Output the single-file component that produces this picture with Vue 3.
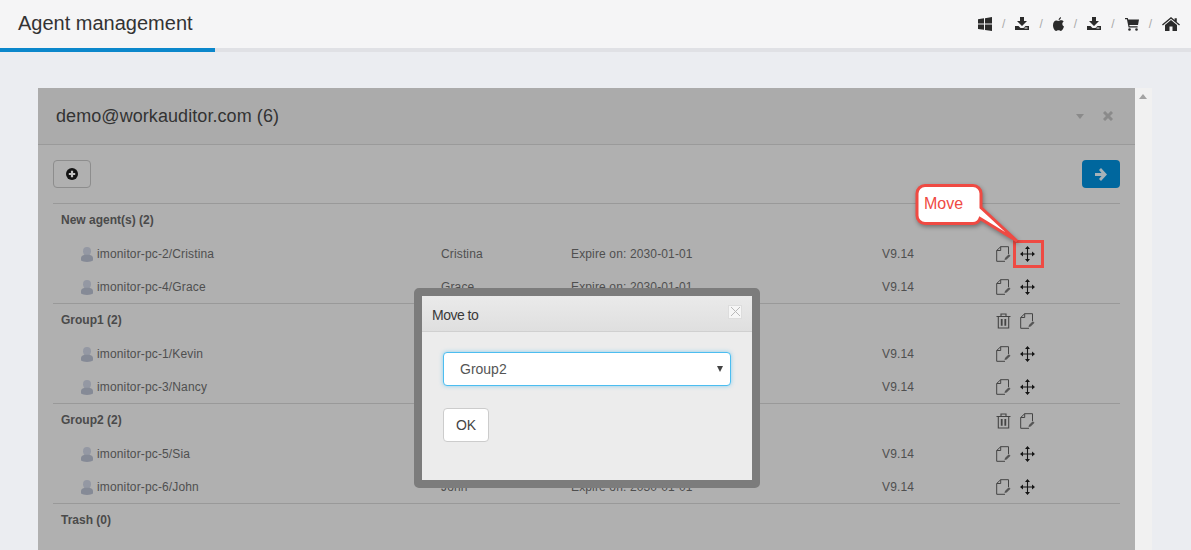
<script setup>
const crumbs = ['win', 'down', 'apple', 'down', 'cart', 'home']
const groups = [
  { name: 'New agent(s) (2)', tools: false, rows: [
    { pc: 'imonitor-pc-2/Cristina', user: 'Cristina' },
    { pc: 'imonitor-pc-4/Grace', user: 'Grace' } ] },
  { name: 'Group1 (2)', tools: true, rows: [
    { pc: 'imonitor-pc-1/Kevin', user: 'Kevin' },
    { pc: 'imonitor-pc-3/Nancy', user: 'Nancy' } ] },
  { name: 'Group2 (2)', tools: true, rows: [
    { pc: 'imonitor-pc-5/Sia', user: 'Sia' },
    { pc: 'imonitor-pc-6/John', user: 'John' } ] },
  { name: 'Trash (0)', tools: false, rows: [] }
]
</script>

<template>
  <div class="page">
    <header class="topbar">
      <h1 class="title">Agent management</h1>
      <nav class="crumbs">
        <template v-for="(c, i) in crumbs" :key="i">
          <span v-if="i" class="sep">/</span>
          <svg v-if="c === 'win'" class="ci" width="14" height="14" viewBox="0 0 14 14"><path fill="#2b2b2b" d="M0 2.200 6 1.300V6.600H0ZM7 1.200 14 0V6.600H7ZM0 7.500H6V12.800L0 11.900ZM7 7.500H14V14L7 12.900Z"/></svg>
          <svg v-else-if="c === 'down'" class="ci" width="14" height="14" viewBox="0 0 14 14"><path fill="#2b2b2b" d="M5 0H9V4H12L7 9 2 4H5ZM0 9H3.500L5.500 11H8.500L10.500 9H14V13H0Z"/><rect x="9.500" y="10.500" width="3" height="1" fill="#f5f5f6"/></svg>
          <svg v-else-if="c === 'apple'" class="ci" width="11" height="14" viewBox="0 0 11 14"><path fill="#2b2b2b" d="M5.600 3.200C5.600 1.600 6.600.4 8 0c.1 1.600-1 3-2.400 3.200ZM5.500 3.900c.9 0 1.500-.6 2.700-.6.9 0 1.900.5 2.500 1.300-2 1.200-1.700 4 .3 4.900-.6 1.900-1.900 4.400-3.200 4.400-.9 0-1.200-.6-2.300-.6s-1.500.6-2.300.6C1.500 13.900 0 10.800 0 8.200 0 5.400 1.600 3.400 3.400 3.400c.9 0 1.500.5 2.100.5Z"/></svg>
          <svg v-else-if="c === 'cart'" class="ci" width="14" height="14" viewBox="0 0 14 14"><path fill="#2b2b2b" d="M0 1H2.800L3.200 2.500H14L13 8H4.300L4.600 9.300H12.600V10.500H3.600L1.900 2.200H0Z"/><circle cx="4.500" cy="12.500" r="1.300" fill="#2b2b2b"/><circle cx="11.500" cy="12.500" r="1.300" fill="#2b2b2b"/></svg>
          <svg v-else class="ci" width="18" height="14" viewBox="0 0 18 14"><path fill="#2b2b2b" d="M3 8 9 3l6 5v6H10.500V9.500h-3V14H3ZM0 7.600 9 0l3.600 3V1.200h2.200V4.900L18 7.600l-.9 1L9 1.800.9 8.600Z"/></svg>
        </template>
      </nav>
    </header>

    <main class="content">
      <section class="panel">
        <div class="panel-head">
          <h2 class="panel-title">demo@workauditor.com (6)</h2>
          <div class="panel-tools">
            <svg width="8" height="5" viewBox="0 0 8 5"><path fill="#8a8a8a" d="M0 0H8L4 5Z"/></svg>
            <svg width="10" height="10" viewBox="0 0 10 10"><path stroke="#8a8a8a" stroke-width="3" d="M1 1 9 9M9 1 1 9"/></svg>
          </div>
        </div>
        <div class="panel-body">
          <div class="toolbar">
            <button class="btn-add">
              <svg width="12" height="12" viewBox="0 0 12 12"><circle cx="6" cy="6" r="6" fill="#141414"/><path stroke="#c4c4c4" stroke-width="2.200" d="M6 2.800V9.200M2.800 6H9.200"/></svg>
            </button>
            <button class="btn-go">
              <svg width="12" height="13" viewBox="0 0 12 13"><path fill="#a8b2b8" d="M6 0 12 6.500 6 13 4 11 6.500 8H0V5H6.500L4 2Z"/></svg>
            </button>
          </div>
          <div v-for="g in groups" :key="g.name" class="group">
            <div class="row head">
              <span class="group-name">{{ g.name }}</span>
              <span class="actions" v-if="g.tools">
                <svg class="ic" width="15" height="16" viewBox="0 0 15 16"><path fill="none" stroke="#444" stroke-width="1.100" d="M.5 3.500H14.500M5 3.500V1H10V3.500M2.300 3.500V15H12.700V3.500"/><path stroke="#444" stroke-width="1.800" d="M5.700 6V12.800M9.300 6V12.800"/></svg>
                <svg class="ic" width="15" height="16" viewBox="0 0 15 16"><path fill="none" stroke="#444" stroke-width="1" d="M9 15.300H.7V4.500L4.700 .7H12.500V8M.7 4.500H4.700V.7"/><path fill="#555" d="M8.500 14 9 12 12.800 8.200 14.500 9.800 10.700 13.500Z"/></svg>
              </span>
            </div>
            <div v-for="r in g.rows" :key="r.pc" class="row">
              <span class="pc">
                <svg class="usr" width="12" height="15" viewBox="0 0 12 15"><ellipse cx="6" cy="4.200" rx="4" ry="4.200" fill="#9498a3"/><path fill="#858a96" d="M0 11C0 9 2 8.200 3.500 7.800H8.500C10 8.200 12 9 12 11V13.500C10 15.400 2 15.400 0 13.500Z"/></svg>
                {{ r.pc }}
              </span>
              <span>{{ r.user }}</span>
              <span>Expire on: 2030-01-01</span>
              <span>V9.14</span>
              <span class="actions">
                <svg class="ic" width="15" height="16" viewBox="0 0 15 16"><path fill="none" stroke="#444" stroke-width="1" d="M9 15.300H.7V4.500L4.700 .7H12.500V8M.7 4.500H4.700V.7"/><path fill="#555" d="M8.500 14 9 12 12.800 8.200 14.500 9.800 10.700 13.500Z"/></svg>
                <svg class="ic" width="15" height="16" viewBox="0 0 15 16"><path fill="none" stroke="#151515" stroke-width="1.100" d="M7.500 1V15M1 8H14"/><path fill="#151515" d="M7.500 0 10 3H5ZM7.500 16 5 13H10ZM0 8 3 5.500V10.500ZM15 8 12 10.500V5.500Z"/></svg>
              </span>
            </div>
          </div>
        </div>
      </section>
      <aside class="scroll"><i class="up"></i></aside>
    </main>

    <div class="highlight"></div>
    <div class="callout">
      <svg width="150" height="100" viewBox="906 176 150 100">
        <path class="bubble" d="M925 185.500H973a8 8 0 0 1 8 8V207.500L1017 241 980 218.500Q978 223.500 973 223.500H925a8 8 0 0 1-8-8V193.500a8 8 0 0 1 8-8Z"/>
      </svg>
      <span class="callout-text">Move</span>
    </div>

    <div class="modal">
      <div class="modal-head">
        <span class="modal-title">Move to</span>
        <span class="modal-x"><svg width="9" height="9" viewBox="0 0 9 9"><path stroke="#b9b9b9" d="M0 0 9 9M9 0 0 9"/></svg></span>
      </div>
      <div class="modal-body">
        <div class="select"><span>Group2</span><i class="caret"></i></div>
        <button class="btn-ok">OK</button>
      </div>
    </div>
  </div>
</template>

<style scoped>
.page { position: relative; width: 1191px; height: 550px; overflow: hidden; background: #ebedf1; font-family: "Liberation Sans", Arial, sans-serif; color: #505050; }
.topbar { height: 48px; display: flex; align-items: center; justify-content: space-between; padding: 0 11px 0 18px; background: #f5f5f6; border-bottom: 4px solid #e0e1e5; position: relative; }
.topbar::after { content: ""; position: absolute; left: 0; bottom: -4px; width: 215px; height: 4px; background: #0b87cb; }
.title { margin: -2px 0 0; font-size: 20px; font-weight: 400; color: #333; line-height: 46px; }
.crumbs { display: flex; align-items: center; }
.ci { display: block; margin-top: -1px; }
.sep { width: 23.4px; text-align: center; font-size: 12px; color: #aaa; }
.content { display: flex; align-items: stretch; padding: 36px 39px 0 38px; }
.panel { flex: 1; min-width: 0; height: 600px; background: #b0b0b0; }
.panel-head { height: 56px; display: flex; align-items: center; justify-content: space-between; padding: 0 22px 0 18px; background: #ababab; border-bottom: 1px solid #9a9a9a; }
.panel-title { margin: 0; font-size: 18px; font-weight: 400; color: #333; letter-spacing: 0.07px; }
.panel-tools { display: flex; align-items: center; gap: 19px; }
.panel-body { padding: 15px 15px 0; }
.toolbar { display: flex; justify-content: space-between; height: 43px; border-bottom: 1px solid #999; box-sizing: content-box; }
.btn-add { width: 38px; height: 28px; padding: 0; border: 1px solid #8d8d8d; border-radius: 4px; background: #b0b0b0; display: flex; align-items: center; justify-content: center; }
.btn-go { width: 38px; height: 28px; padding: 0; border: 0; border-radius: 4px; background: #00679e; display: flex; align-items: center; justify-content: center; }
.group { border-bottom: 1px solid #999; }
.group:last-child { border-bottom: 0; }
.row { height: 33px; display: grid; grid-template-columns: 388px 130px 311px 114px 1fr; align-items: center; font-size: 12px; letter-spacing: 0.14px; color: #4f4f4f; }
.group-name { grid-column: 1 / span 4; padding-left: 8px; font-weight: 700; letter-spacing: 0; color: #4a4a4a; margin-top: -1px; }
.pc { display: flex; align-items: center; padding-left: 28px; gap: 4px; }
.usr { flex: none; margin-top: 1px; }
.actions { display: flex; align-items: center; gap: 9px; margin-top: 1px; }
.ic { display: block; flex: none; }
.scroll { width: 17px; background: #f1f1f1; position: relative; }
.up { position: absolute; left: 4px; top: 6px; border: 4px solid transparent; border-top: 0; border-bottom: 5px solid #a3a3a3; }
.highlight { position: absolute; left: 1013px; top: 240px; width: 31px; height: 28px; box-sizing: border-box; border: 3px solid #ef4a43; }
.callout { position: absolute; left: 906px; top: 176px; width: 150px; height: 100px; }
.bubble { fill: #fff; stroke: #ef4a43; stroke-width: 3; filter: drop-shadow(1px 2px 2px rgba(0,0,0,.35)); }
.callout svg { display: block; overflow: visible; }
.callout-text { position: absolute; left: 18px; top: 18px; font-size: 16px; line-height: 20px; color: #ef4a43; }
.modal { position: absolute; left: 414px; top: 288px; width: 330px; height: 184px; border: 8px solid #7c7c7c; border-radius: 5px; background: #ececec; display: flex; flex-direction: column; }
.modal-head { height: 35px; display: flex; align-items: center; justify-content: space-between; padding: 0 10px 0 10px; background: linear-gradient(#eaeaea, #dfdfdf); border-bottom: 1px solid #d0d0d0; flex: none; }
.modal-title { font-size: 14px; letter-spacing: -0.5px; color: #3a3a3a; margin-top: 2px; }
.modal-x { width: 12px; height: 12px; border: 1px solid #ddd; background: #f6f6f6; display: flex; align-items: center; justify-content: center; margin-top: -4px; }
.modal-body { padding: 20px 21px 0; display: flex; flex-direction: column; align-items: flex-start; gap: 22px; }
.select { width: 288px; height: 34px; box-sizing: border-box; border: 1px solid #4cbdf0; border-radius: 4px; background: #fff; box-shadow: 0 0 4px rgba(76,189,240,.6); display: flex; align-items: center; justify-content: space-between; padding: 0 7px 0 16px; font-size: 14px; color: #555; }
.caret { border: 3px solid transparent; border-bottom: 0; border-top: 6px solid #444; width: 0; height: 0; }
.btn-ok { width: 46px; height: 34px; padding: 0; border: 1px solid #ccc; border-radius: 4px; background: #fff; font: 14px "Liberation Sans", Arial, sans-serif; color: #444; }
</style>

<style>
html, body { margin: 0; background: #ebedf1; }
</style>
